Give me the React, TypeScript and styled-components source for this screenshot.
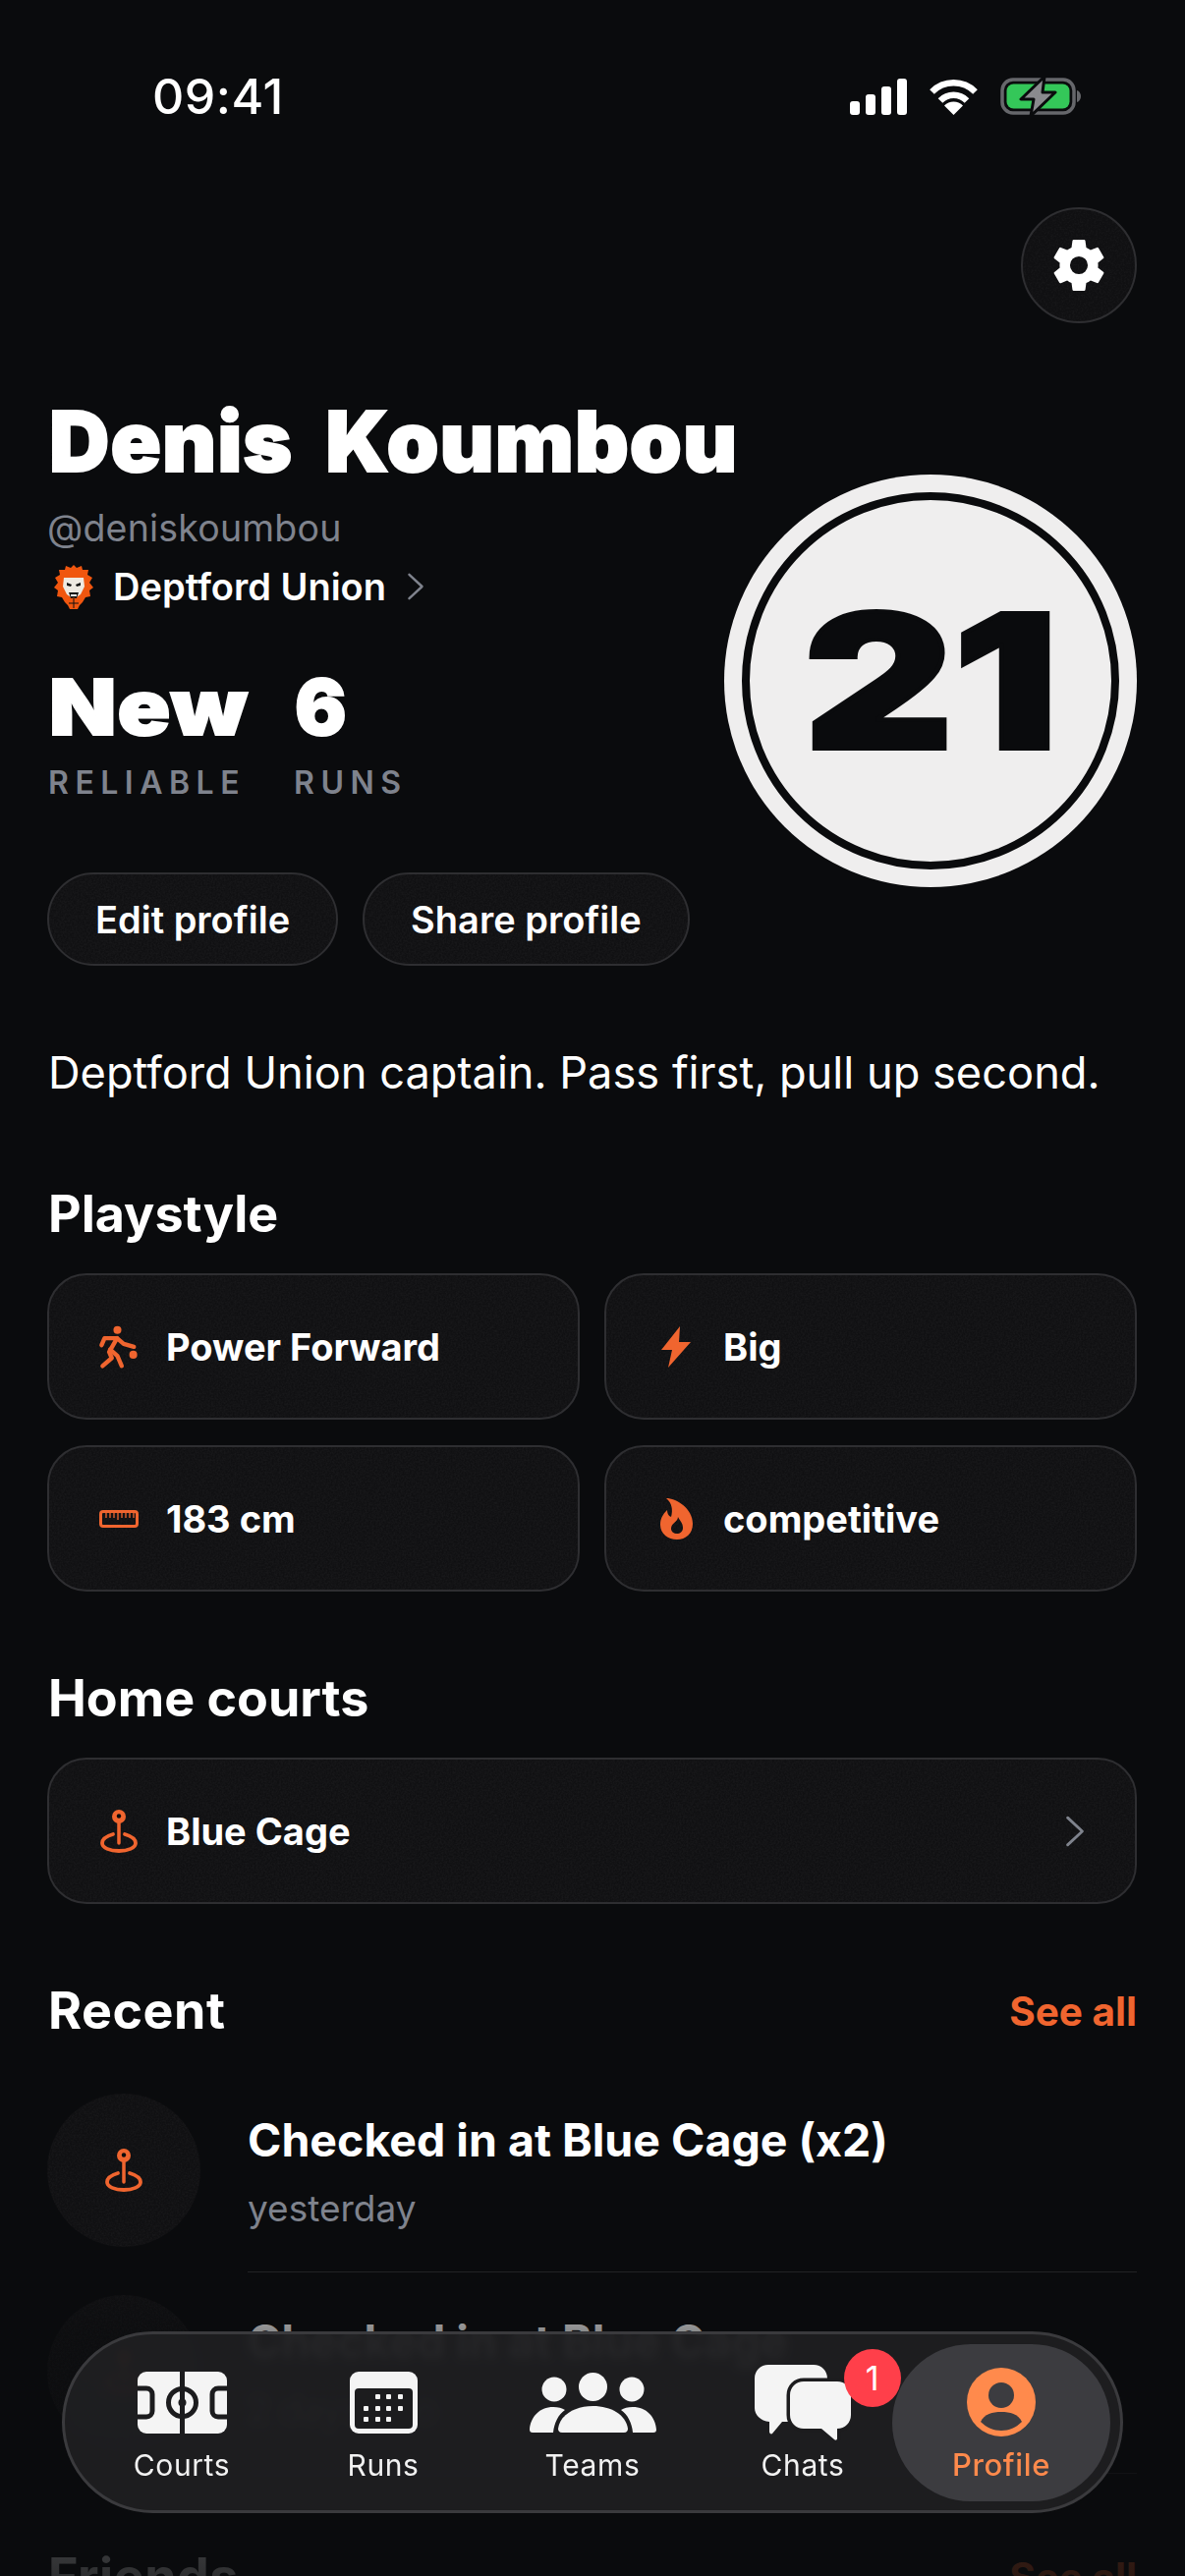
import styled, { createGlobalStyle } from "styled-components";
import { IoSettingsSharp } from "react-icons/io5";

const NOISE = `url("data:image/svg+xml,%3Csvg xmlns='http://www.w3.org/2000/svg' width='160' height='160'%3E%3Cfilter id='n'%3E%3CfeTurbulence type='fractalNoise' baseFrequency='.55' numOctaves='2'/%3E%3CfeColorMatrix values='0 0 0 0 1 0 0 0 0 1 0 0 0 0 1 0 0 0 .9 -.3'/%3E%3C/filter%3E%3Crect width='160' height='160' filter='url(%23n)' opacity='.07'/%3E%3C/svg%3E")`;

const ORANGE = "#f0652f";
const GREY = "#7f838d";
const BG = "#0a0b0d";
const SURFACE = "#101012";
const EDGE = "#2e2e31";

const Global = createGlobalStyle`
  html, body {
    margin: 0;
    background: ${BG};
  }
  * { box-sizing: border-box; }
`;

const Page = styled.div`
  position: relative;
  width: 1206px;
  height: 2622px;
  overflow: hidden;
  background: ${BG};
  color: #fff;
  font-family: Inter, "Liberation Sans", sans-serif;
`;
const StatusBar = styled.div`
  height: 196px;
  padding: 0 106px 0 155px;
  display: flex;
  align-items: center;
  justify-content: space-between;
`;
const Time = styled.div`
  font-size: 50px;
  font-weight: 500;
  letter-spacing: 0.5px;
`;
const StatusIcons = styled.div`
  display: flex;
  align-items: center;
  gap: 22px;
`;
const Content = styled.div`
  padding: 0 49px 0 48px;
`;
const TopActions = styled.div`
  margin-top: 15px;
  display: flex;
  justify-content: flex-end;
`;
const GearButton = styled.button`
  width: 118px;
  height: 118px;
  padding: 0;
  border-radius: 50%;
  border: 2px solid ${EDGE};
  background: ${SURFACE} ${NOISE};
  color: #fff;
  font-size: 58px;
  display: flex;
  align-items: center;
  justify-content: center;
`;
const Name = styled.h1`
  margin: 87px 0 0 2px;
  font-size: 85px;
  line-height: 67px;
  font-weight: 900;
  letter-spacing: 1px;
  word-spacing: 15px;
  -webkit-text-stroke: 2px #fff;
  white-space: nowrap;
`;
const Hero = styled.div`
  display: flex;
  justify-content: space-between;
  align-items: flex-start;
`;
const HeroLeft = styled.div`
  padding-top: 30px;
`;
const Handle = styled.div`
  font-size: 37.500px;
  line-height: 50px;
  letter-spacing: 0.2px;
  color: ${GREY};
`;
const TeamRow = styled.div`
  margin: 11px 0 0 7px;
  height: 46px;
  display: flex;
  align-items: center;
  font-size: 38px;
  font-weight: 600;
`;
const TeamName = styled.span`
  margin: 0 21px 0 20px;
`;
const Stats = styled.div`
  margin: 60px 0 0 2px;
  display: flex;
  gap: 50px;
`;
const Stat = styled.div<{ $w: number }>`
  width: ${(p) => p.$w}px;
`;
const StatValue = styled.div<{ $sx?: number }>`
  font-size: 78px;
  line-height: 80px;
  font-weight: 900;
  letter-spacing: 1px;
  -webkit-text-stroke: 2px #fff;
  transform: scaleX(${(p) => p.$sx ?? 1});
  transform-origin: left center;
`;
const StatLabel = styled.div`
  margin: 19px 0 0 -1px;
  font-size: 32px;
  line-height: 36px;
  font-weight: 600;
  letter-spacing: 6.500px;
  color: ${GREY};
  white-space: nowrap;
`;
const Buttons = styled.div`
  margin-top: 73px;
  display: flex;
  gap: 25px;
`;
const PillButton = styled.button`
  height: 95px;
  padding: 0 47px;
  border-radius: 48px;
  border: 2px solid ${EDGE};
  background: ${SURFACE} ${NOISE};
  color: #fff;
  font-family: inherit;
  font-size: 38px;
  font-weight: 600;
  white-space: nowrap;
`;
const Jersey = styled.div`
  flex: none;
  width: 420px;
  height: 420px;
  padding: 18px;
  border-radius: 50%;
  background: #efeeee;
`;
const JerseyRing = styled.div`
  height: 100%;
  border-radius: 50%;
  border: 8px solid ${BG};
  display: flex;
  align-items: center;
  justify-content: center;
  color: ${BG};
  font-size: 190px;
  font-weight: 900;
  -webkit-text-stroke: 4px ${BG};
`;
const JerseyNumber = styled.span`
  display: inline-block;
  transform: scaleX(1.24);
`;
const Bio = styled.p`
  margin: 79px 0 0 1px;
  font-size: 45.200px;
  line-height: 60px;
  white-space: nowrap;
`;
const Heading = styled.h2<{ $top: number }>`
  margin: ${(p) => p.$top}px 0 30px 1px;
  font-size: 52px;
  line-height: 60px;
  font-weight: 700;
`;
const Grid = styled.div`
  display: grid;
  grid-template-columns: 1fr 1fr;
  gap: 26px 25px;
`;
const Card = styled.div`
  height: 149px;
  padding: 0 51px 0 46px;
  border-radius: 40px;
  border: 2px solid ${EDGE};
  background: ${SURFACE} ${NOISE};
  display: flex;
  align-items: center;
  font-size: 38px;
  font-weight: 700;
`;
const CardIcon = styled.span`
  flex: none;
  width: 50px;
  margin-right: 23px;
  display: flex;
  justify-content: center;
`;
const CardText = styled.span`
  flex: 1;
`;
const SectionRow = styled.div`
  margin-top: 79px;
  display: flex;
  align-items: center;
  justify-content: space-between;
`;
const SectionRowNext = styled(SectionRow)`
  margin-top: 75px;
`;
const RowHeading = styled.h2`
  margin: 0 0 0 1px;
  font-size: 52px;
  line-height: 60px;
  font-weight: 700;
  letter-spacing: 0.5px;
`;
const SeeAll = styled.span`
  font-size: 40.500px;
  font-weight: 700;
  color: ${ORANGE};
`;
const Activity = styled.div`
  margin-top: 23px;
  display: flex;
  gap: 48px;
  &:first-of-type {
    margin-top: 54px;
  }
`;
const ActivityCircle = styled.div`
  flex: none;
  width: 156px;
  height: 156px;
  border-radius: 50%;
  background: ${SURFACE} ${NOISE};
  display: flex;
  align-items: center;
  justify-content: center;
`;
const ActivityText = styled.div`
  flex: 1;
  padding: 17px 0 34px;
  border-bottom: 1px solid #242427;
`;
const ActivityTitle = styled.div`
  font-size: 46.500px;
  line-height: 60px;
  font-weight: 700;
`;
const ActivityTime = styled.div`
  margin-top: 10px;
  font-size: 37px;
  line-height: 60px;
  color: ${GREY};
`;
const Fade = styled.div`
  position: absolute;
  left: 0;
  right: 0;
  bottom: 0;
  height: 322px;
  background: linear-gradient(
    rgba(10, 11, 13, 0),
    rgba(10, 11, 13, 0.5) 24%,
    rgba(10, 11, 13, 0.85) 100%
  );
`;
const TabBar = styled.nav`
  position: absolute;
  left: 63px;
  bottom: 64px;
  width: 1080px;
  height: 185px;
  padding: 10px 10px 0 14px;
  border-radius: 93px;
  border: 3px solid #3a3a3d;
  background: rgba(31, 31, 33, 0.93);
  backdrop-filter: blur(4px);
  display: grid;
  grid-template-columns: 210px 200px 226px 192px 222px;
  grid-template-rows: 160px;
`;
const Tab = styled.div<{ $active?: boolean; $shift?: number }>`
  padding: 19px 0 0 ${(p) => p.$shift ?? 0}px;
  border-radius: 80px;
  display: flex;
  flex-direction: column;
  align-items: center;
  background: ${(p) => (p.$active ? "#3c3c40" : "transparent")};
  color: ${(p) => (p.$active ? "#ff8a4c" : "#f2f2f2")};
  font-size: ${(p) => (p.$active ? 31 : 30)}px;
  font-weight: ${(p) => (p.$active ? 500 : 400)};
  line-height: 36px;
  letter-spacing: 0.600px;
`;
const TabIcon = styled.div`
  position: relative;
  height: 80px;
  margin-bottom: 6px;
  display: flex;
  align-items: center;
`;
const Badge = styled.span`
  position: absolute;
  left: 91px;
  top: -14px;
  width: 58px;
  height: 59px;
  border-radius: 50%;
  background: #ff3f4a;
  color: #fff;
  font-size: 34px;
  display: flex;
  align-items: center;
  justify-content: center;
`;

const Signal = () => (
  <svg width="58" height="37" viewBox="0 0 58 37" fill="#fff">
    <rect x="0" y="23" width="10" height="14" rx="3" />
    <rect x="16" y="16" width="10" height="21" rx="3" />
    <rect x="32" y="8" width="10" height="29" rx="3" />
    <rect x="48" y="0" width="10" height="37" rx="3" />
  </svg>
);

const Wifi = () => (
  <svg width="51" height="37" viewBox="0 0 51 37" fill="none" stroke="#fff" strokeWidth="6.5">
    <path d="M3.5 13.5A31 31 0 0 1 47.5 13.5" />
    <path d="M12 22.5A19 19 0 0 1 39 22.5" />
    <path d="M25.5 37L16 27.5A13.5 13.5 0 0 1 35 27.5Z" fill="#fff" stroke="none" />
  </svg>
);

const Battery = () => (
  <svg width="82" height="40" viewBox="0 0 82 40">
    <rect x="2" y="3" width="73" height="34" rx="11" fill="none" stroke="#66676b" strokeWidth="3.5" />
    <rect x="6.5" y="7.5" width="64" height="25" rx="7" fill="#34c759" />
    <path d="M78 14c2.500.8 4 3 4 6s-1.500 5.200-4 6z" fill="#66676b" />
    <path d="M45 0L21 23h13l-3 17 25-24H43z" fill="#8a8a8e" stroke={BG} strokeWidth="3" strokeLinejoin="round" />
  </svg>
);

const Lion = () => (
  <svg width="40" height="45" viewBox="0 0 40 45">
    <path d="M20 0l3 3 5-2 1 4 6 0-1 5 5 3-3 5 4 5-4 3 1 6-5 1-3 5-3 3-2 4-4 0-4 0-2-4-3-3-3-5-5-1 1-6-4-3 4-5-3-5 5-3-1-5 6 0 1-4 5 2z" fill="#f0560f" />
    <path d="M10 13h20l1 9-4 8-7 5-7-5-4-8z" fill="#eee9e2" />
    <rect x="9" y="9" width="22" height="4" fill="#f0560f" />
    <path d="M13 18l5 2-1 2-4-1zM27 18l-5 2 1 2 4-1z" fill="#111" />
    <path d="M15 28h10l-2 6h-6z" fill="#111" />
    <path d="M17 30h6v2h-6z" fill="#eee" />
    <circle cx="20" cy="39" r="5.500" fill="#f0560f" />
    <path d="M20 34v10M15 39h10" stroke="#111" strokeWidth="1" />
  </svg>
);

const Chevron = ({ w, h }: { w: number; h: number }) => (
  <svg width={w} height={h} viewBox="0 0 18 30" fill="none" stroke={GREY} strokeWidth="2.600" strokeLinecap="round" strokeLinejoin="round">
    <path d="M2 2l14 13L2 28" />
  </svg>
);

const Dribble = () => (
  <svg width="42" height="46" viewBox="60 85 125 135" fill="none" stroke={ORANGE} strokeWidth="13" strokeLinecap="round" strokeLinejoin="round">
    <circle cx="118" cy="101" r="12" fill={ORANGE} stroke="none" />
    <path d="M70 147l9-21h38l-24 42 8 18-28 24" />
    <path d="M117 126l20 17 31 9" />
    <path d="M96 160l22 20 13 30" />
    <circle cx="166" cy="176" r="12" fill={ORANGE} stroke="none" />
  </svg>
);

const Bolt = () => (
  <svg width="30" height="42" viewBox="0 0 30 42" fill={ORANGE}>
    <path d="M19 0L0 24h11L7 42l23-26H18z" />
  </svg>
);

const Ruler = () => (
  <svg width="40" height="18" viewBox="0 0 40 18" fill="none" stroke={ORANGE}>
    <rect x="1.500" y="1.500" width="37" height="15" rx="2.500" strokeWidth="3" />
    <path d="M7 3v5M11 3v5M15 3v5M19 3v7M23 3v5M27 3v5M31 3v5M35 3v5" strokeWidth="1.300" />
  </svg>
);

const Flame = () => (
  <svg width="33" height="42" viewBox="0 0 33 42" fill={ORANGE} fillRule="evenodd">
    <path d="M6 0c10 0 27 10 27 26 0 10-7 16-16 16S0 36 0 27c0-7 3-11 7-15 0 3 1 6 4 7C13 12 12 5 6 0z M18 19c0 5-7 6-7 12 0 3 3 5 6 5s6-2 6-6c0-5-3-7-5-11z" />
  </svg>
);

const Pin = () => (
  <svg width="38" height="44" viewBox="0 0 38 44" fill="none" stroke={ORANGE}>
    <circle cx="19" cy="7" r="7" fill={ORANGE} stroke="none" />
    <circle cx="19" cy="6.500" r="2.200" fill={BG} stroke="none" />
    <path d="M19 12v22" strokeWidth="3.500" strokeLinecap="round" />
    <path d="M13 25C6 27 2 30 2 34c0 5 8 8 17 8s17-3 17-8c0-4-4-7-11-9" strokeWidth="3.800" strokeLinecap="round" />
  </svg>
);

const CourtIcon = () => (
  <svg width="91" height="63" viewBox="0 0 91 63" fill="none">
    <rect width="91" height="63" rx="9" fill="#f4f4f4" />
    <path d="M45.500 0v63" stroke="#1c1c1e" strokeWidth="5" />
    <circle cx="45.500" cy="31.500" r="14" stroke="#1c1c1e" strokeWidth="5" />
    <circle cx="45.500" cy="31.500" r="4" fill="#1c1c1e" />
    <path d="M0 17h9a6 6 0 0 1 6 6v17a6 6 0 0 1-6 6H0" stroke="#1c1c1e" strokeWidth="5" />
    <path d="M91 17h-9a6 6 0 0 0-6 6v17a6 6 0 0 0 6 6h9" stroke="#1c1c1e" strokeWidth="5" />
  </svg>
);

const CalendarIcon = () => (
  <svg width="69" height="63" viewBox="0 0 69 63">
    <rect width="69" height="63" rx="9" fill="#f4f4f4" />
    <rect x="5" y="17" width="59" height="41" rx="4" fill="#1c1c1e" />
    <g fill="#f4f4f4">
      <rect x="26" y="23" width="5" height="5" rx="1" />
      <rect x="37" y="23" width="5" height="5" rx="1" />
      <rect x="49" y="23" width="5" height="5" rx="1" />
      <rect x="14" y="35" width="5" height="5" rx="1" />
      <rect x="26" y="35" width="5" height="5" rx="1" />
      <rect x="37" y="35" width="5" height="5" rx="1" />
      <rect x="49" y="35" width="5" height="5" rx="1" />
      <rect x="14" y="46" width="5" height="5" rx="1" />
      <rect x="26" y="46" width="5" height="5" rx="1" />
      <rect x="37" y="46" width="5" height="5" rx="1" />
    </g>
  </svg>
);

const TeamIcon = () => (
  <svg width="129" height="61" viewBox="0 0 129 61" fill="#f4f4f4">
    <circle cx="25" cy="17" r="12.500" />
    <circle cx="64.500" cy="14.500" r="14.500" />
    <circle cx="104" cy="17" r="12.500" />
    <path d="M3 61c-2 0-3-1-3-3 1-13 10-23 24-23 5 0 9 1 12 3-7 5-11 13-12 23z" />
    <path d="M126 61c2 0 3-1 3-3-1-13-10-23-24-23-5 0-9 1-12 3 7 5 11 13 12 23z" />
    <path d="M33 61c-3 0-4-2-4-4 2-14 17-23 35.500-23S98 43 100 57c0 2-1 4-4 4z" />
  </svg>
);

const ChatIcon = () => (
  <svg width="98" height="77" viewBox="0 0 98 77" fill="#f4f4f4">
    <path d="M14 0h46c8 0 14 6 14 14v30c0 8-6 14-14 14H28L18 70c-1 1-3 0-3-2V58C6 57 0 51 0 44V14C0 6 6 0 14 0z" />
    <path d="M50 17h34c8 0 14 6 14 14v20c0 8-6 14-14 14v10c0 2-2 2-3 1L68 65H50c-8 0-14-6-14-14V31c0-8 6-14 14-14z" stroke="#1c1c1e" strokeWidth="7" paintOrder="stroke" />
  </svg>
);

const ProfileIcon = () => (
  <svg width="70" height="70" viewBox="0 0 70 70">
    <circle cx="35" cy="35" r="35" fill="#ff8a4c" />
    <circle cx="35" cy="28" r="13" fill="#3c3c40" />
    <path d="M14 55c4-8 12-10 21-10s17 2 21 10c-6 6-13 9-21 9s-15-3-21-9z" fill="#3c3c40" />
  </svg>
);

export default function App() {
  return (
    <Page>
      <Global />
      <StatusBar>
        <Time>09:41</Time>
        <StatusIcons>
          <Signal />
          <Wifi />
          <Battery />
        </StatusIcons>
      </StatusBar>
      <Content>
        <TopActions>
          <GearButton aria-label="Settings">
            <IoSettingsSharp />
          </GearButton>
        </TopActions>
        <Name>Denis Koumbou</Name>
        <Hero>
          <HeroLeft>
            <Handle>@deniskoumbou</Handle>
            <TeamRow>
              <Lion />
              <TeamName>Deptford Union</TeamName>
              <Chevron w={18} h={28} />
            </TeamRow>
            <Stats>
              <Stat $w={200}>
                <StatValue $sx={1.14}>New</StatValue>
                <StatLabel>RELIABLE</StatLabel>
              </Stat>
              <Stat $w={110}>
                <StatValue>6</StatValue>
                <StatLabel>RUNS</StatLabel>
              </Stat>
            </Stats>
            <Buttons>
              <PillButton>Edit profile</PillButton>
              <PillButton>Share profile</PillButton>
            </Buttons>
          </HeroLeft>
          <Jersey>
            <JerseyRing>
              <JerseyNumber>21</JerseyNumber>
            </JerseyRing>
          </Jersey>
        </Hero>
        <Bio>Deptford Union captain. Pass first, pull up second.</Bio>

        <Heading $top={84}>Playstyle</Heading>
        <Grid>
          <Card>
            <CardIcon><Dribble /></CardIcon>
            <CardText>Power Forward</CardText>
          </Card>
          <Card>
            <CardIcon><Bolt /></CardIcon>
            <CardText>Big</CardText>
          </Card>
          <Card>
            <CardIcon><Ruler /></CardIcon>
            <CardText>183 cm</CardText>
          </Card>
          <Card>
            <CardIcon><Flame /></CardIcon>
            <CardText>competitive</CardText>
          </Card>
        </Grid>

        <Heading $top={79}>Home courts</Heading>
        <Card>
          <CardIcon><Pin /></CardIcon>
          <CardText>Blue Cage</CardText>
          <Chevron w={20} h={32} />
        </Card>

        <SectionRow>
          <RowHeading>Recent</RowHeading>
          <SeeAll>See all</SeeAll>
        </SectionRow>
        <div>
          <Activity>
            <ActivityCircle><Pin /></ActivityCircle>
            <ActivityText>
              <ActivityTitle>Checked in at Blue Cage (x2)</ActivityTitle>
              <ActivityTime>yesterday</ActivityTime>
            </ActivityText>
          </Activity>
          <Activity>
            <ActivityCircle><Pin /></ActivityCircle>
            <ActivityText>
              <ActivityTitle>Checked in at Blue Cage</ActivityTitle>
              <ActivityTime>2 days ago</ActivityTime>
            </ActivityText>
          </Activity>
        </div>

        <SectionRowNext>
          <RowHeading>Friends</RowHeading>
          <SeeAll>See all</SeeAll>
        </SectionRowNext>
      </Content>

      <Fade />
      <TabBar>
        <Tab>
          <TabIcon><CourtIcon /></TabIcon>
          Courts
        </Tab>
        <Tab>
          <TabIcon><CalendarIcon /></TabIcon>
          Runs
        </Tab>
        <Tab>
          <TabIcon><TeamIcon /></TabIcon>
          Teams
        </Tab>
        <Tab $shift={10}>
          <TabIcon>
            <ChatIcon />
            <Badge>1</Badge>
          </TabIcon>
          Chats
        </Tab>
        <Tab $active>
          <TabIcon><ProfileIcon /></TabIcon>
          Profile
        </Tab>
      </TabBar>
    </Page>
  );
}
